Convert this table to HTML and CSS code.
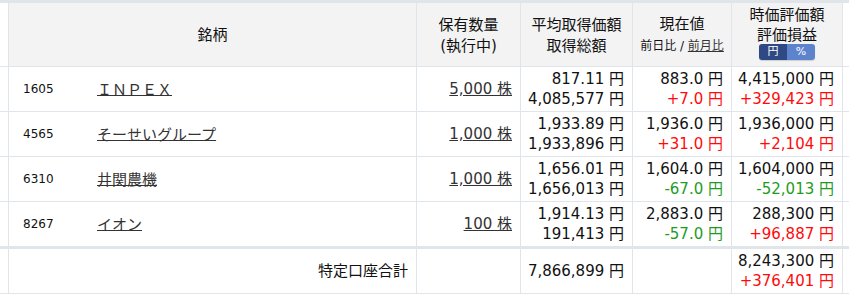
FILE: index.html
```html
<!DOCTYPE html>
<html lang="ja">
<head>
<meta charset="utf-8">
<link rel="stylesheet" href="styles.css">
</head>
<body>
<table class="pf">
  <colgroup>
    <col class="c-pad">
    <col class="c-name">
    <col class="c-qty">
    <col class="c-avg">
    <col class="c-now">
    <col class="c-val">
    <col class="c-rest">
  </colgroup>
  <thead>
    <tr>
      <th></th>
      <th class="h-name">銘柄</th>
      <th>保有数量<br>(執行中)</th>
      <th>平均取得価額<br>取得総額</th>
      <th>現在値<br><span class="sub">前日比 / <a class="lnk">前月比</a></span></th>
      <th class="h-val"><div class="hl1">時価評価額</div><div class="hl2">評価損益</div><div class="toggle"><span class="t-on">円</span><span class="t-off">%</span></div></th>
      <th class="rest"></th>
    </tr>
  </thead>
  <tbody>
    <tr>
      <td></td>
      <td class="name"><span class="code">1605</span><a class="lnk">ＩＮＰＥＸ</a></td>
      <td class="num"><a class="lnk">5,000 株</a></td>
      <td class="num">817.11 円<br>4,085,577 円</td>
      <td class="num">883.0 円<br><span class="up">+7.0 円</span></td>
      <td class="num">4,415,000 円<br><span class="up">+329,423 円</span></td>
      <td class="rest"></td>
    </tr>
    <tr>
      <td></td>
      <td class="name"><span class="code">4565</span><a class="lnk">そーせいグループ</a></td>
      <td class="num"><a class="lnk">1,000 株</a></td>
      <td class="num">1,933.89 円<br>1,933,896 円</td>
      <td class="num">1,936.0 円<br><span class="up">+31.0 円</span></td>
      <td class="num">1,936,000 円<br><span class="up">+2,104 円</span></td>
      <td class="rest"></td>
    </tr>
    <tr>
      <td></td>
      <td class="name"><span class="code">6310</span><a class="lnk">井関農機</a></td>
      <td class="num"><a class="lnk">1,000 株</a></td>
      <td class="num">1,656.01 円<br>1,656,013 円</td>
      <td class="num">1,604.0 円<br><span class="down">-67.0 円</span></td>
      <td class="num">1,604,000 円<br><span class="down">-52,013 円</span></td>
      <td class="rest"></td>
    </tr>
    <tr class="last">
      <td></td>
      <td class="name"><span class="code">8267</span><a class="lnk">イオン</a></td>
      <td class="num"><a class="lnk">100 株</a></td>
      <td class="num">1,914.13 円<br>191,413 円</td>
      <td class="num">2,883.0 円<br><span class="down">-57.0 円</span></td>
      <td class="num">288,300 円<br><span class="up">+96,887 円</span></td>
      <td class="rest"></td>
    </tr>
  </tbody>
  <tfoot>
    <tr>
      <td></td>
      <td class="num total-label">特定口座合計</td>
      <td></td>
      <td class="num">7,866,899 円</td>
      <td></td>
      <td class="num">8,243,300 円<br><span class="up">+376,401 円</span></td>
      <td class="rest"></td>
    </tr>
  </tfoot>
</table>
</body>
</html>
```

FILE: styles.css
```css
html, body {
  margin: 0;
  padding: 0;
  background: #fff;
}

body {
  width: 849px;
  height: 294px;
  overflow: hidden;
  font-family: "DejaVu Sans", "Noto Sans CJK JP", sans-serif;
  font-size: 15px;
  color: #111;
}

.pf {
  table-layout: fixed;
  border-collapse: separate;
  border-spacing: 0;
  width: 857px;
  border-top: 3px solid #dfe5e9;
  border-bottom: 2px solid #dfe5e9;
}

.c-pad { width: 9px; }
.c-name { width: 408px; }
.c-qty { width: 104px; }
.c-avg { width: 112px; }
.c-now { width: 99px; }
.c-val { width: 111px; }
.c-rest { width: 14px; }

.pf th,
.pf td {
  border-right: 1px solid #dfe5ea;
  border-bottom: 1px solid #dfe5ea;
  padding: 0 8px 0 0;
  box-sizing: border-box;
  line-height: 20px;
  vertical-align: middle;
  white-space: nowrap;
}

.pf th {
  background: #f3f3f3;
  font-weight: normal;
  text-align: center;
  height: 64px;
  padding: 2px 0 0 0;
  line-height: 21px;
  color: #111;
}

.pf th:first-child,
.pf td:first-child {
  padding: 0;
  background: #fff;
}

.pf .rest {
  border-right: none;
  background: #fff;
  padding: 0;
}

.pf th.h-val {
  padding-top: 0;
}

.hl1 { line-height: 20px; }
.hl2 { line-height: 21px; }

.sub {
  font-size: 12px;
}

.toggle {
  display: flex;
  width: 56px;
  height: 16px;
  margin: -2px auto 5px;
  border-radius: 3px;
  overflow: hidden;
  box-shadow: 0 1px 1px rgba(0, 0, 0, 0.15);
}

.toggle span {
  flex: 1;
  font-size: 11px;
  line-height: 16px;
  color: #fff;
  text-align: center;
}

.t-on { background: #2e4984; }
.t-off { background: #5e83cd; }

.pf tbody td {
  height: 45px;
}

.pf tbody tr.last td {
  height: 47px;
  border-bottom: 3px solid #dfe5e9;
}

.pf tfoot td {
  height: 44px;
  border-bottom: none;
}

.num {
  text-align: right;
}

.name {
  padding: 0;
}

.name .code {
  display: inline-block;
  width: 88px;
  padding-left: 14px;
  box-sizing: border-box;
  font-size: 12px;
  vertical-align: middle;
}

.name .lnk {
  vertical-align: middle;
}

.lnk {
  color: #333;
  text-decoration: underline;
}

.up { color: #ff0a0a; }
.down { color: #1f9c1f; }

.total-label {
  padding-right: 8px;
}
```
